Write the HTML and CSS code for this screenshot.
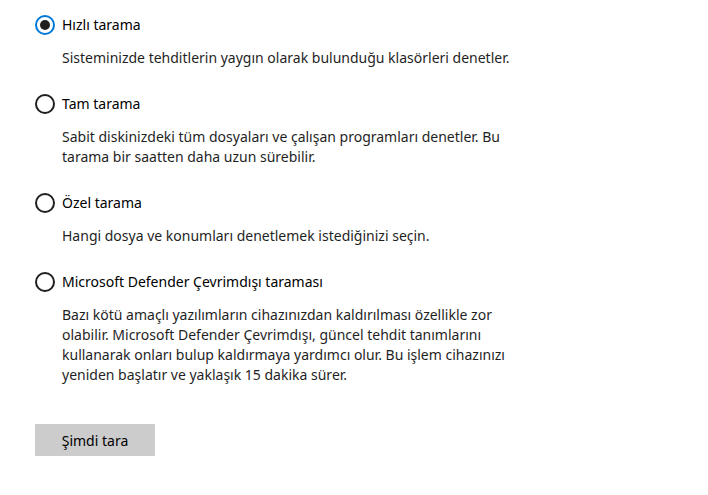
FILE: index.html
```html
<!DOCTYPE html>
<html lang="tr">
<head>
<meta charset="utf-8">
<link rel="stylesheet" href="styles.css">
</head>
<body>
<main class="scan-options">
  <div class="option">
    <label class="option-row">
      <span class="radio checked"><span class="dot"></span></span>
      <span class="title">Hızlı tarama</span>
    </label>
    <p class="desc">Sisteminizde tehditlerin yaygın olarak bulunduğu klasörleri denetler.</p>
  </div>
  <div class="option">
    <label class="option-row">
      <span class="radio"></span>
      <span class="title">Tam tarama</span>
    </label>
    <p class="desc">Sabit diskinizdeki tüm dosyaları ve çalışan programları denetler. Bu<br>tarama bir saatten daha uzun sürebilir.</p>
  </div>
  <div class="option">
    <label class="option-row">
      <span class="radio"></span>
      <span class="title">Özel tarama</span>
    </label>
    <p class="desc">Hangi dosya ve konumları denetlemek istediğinizi seçin.</p>
  </div>
  <div class="option">
    <label class="option-row">
      <span class="radio"></span>
      <span class="title">Microsoft Defender Çevrimdışı taraması</span>
    </label>
    <p class="desc">Bazı kötü amaçlı yazılımların cihazınızdan kaldırılması özellikle zor<br>olabilir. Microsoft Defender Çevrimdışı, güncel tehdit tanımlarını<br>kullanarak onları bulup kaldırmaya yardımcı olur. Bu işlem cihazınızı<br>yeniden başlatır ve yaklaşık 15 dakika sürer.</p>
  </div>
  <button class="scan-btn">Şimdi tara</button>
</main>
</body>
</html>
```
FILE: styles.css
```css
html, body {
  margin: 0;
  padding: 0;
  background: #ffffff;
}
body {
  font-family: "Noto Sans", "Open Sans", sans-serif;
  font-size: 14px;
  color: #000;
}
.scan-options {
  display: flex;
  flex-direction: column;
  align-items: flex-start;
  padding: 15px 0 0 35px;
}
.option {
  display: flex;
  flex-direction: column;
  margin-bottom: 26px;
}
.option-row {
  display: flex;
  align-items: center;
  gap: 7px;
  height: 20px;
  line-height: 20px;
}
.radio {
  box-sizing: border-box;
  width: 20px;
  height: 20px;
  border: 2px solid #1f1f1f;
  border-radius: 50%;
  display: flex;
  align-items: center;
  justify-content: center;
  flex: none;
}
.radio.checked {
  border-color: #0078d7;
}
.dot {
  width: 10px;
  height: 10px;
  border-radius: 50%;
  background: #1f1f1f;
}
.title {
  color: #000;
}
.desc {
  margin: 13px 0 0 27px;
  line-height: 20px;
  color: #1f1f1f;
  white-space: nowrap;
}
.scan-btn {
  margin-top: 13px;
  width: 120px;
  height: 32px;
  border: none;
  background: #cccccc;
  font-family: inherit;
  font-size: 14px;
  color: #000;
  padding: 0;
}
```
